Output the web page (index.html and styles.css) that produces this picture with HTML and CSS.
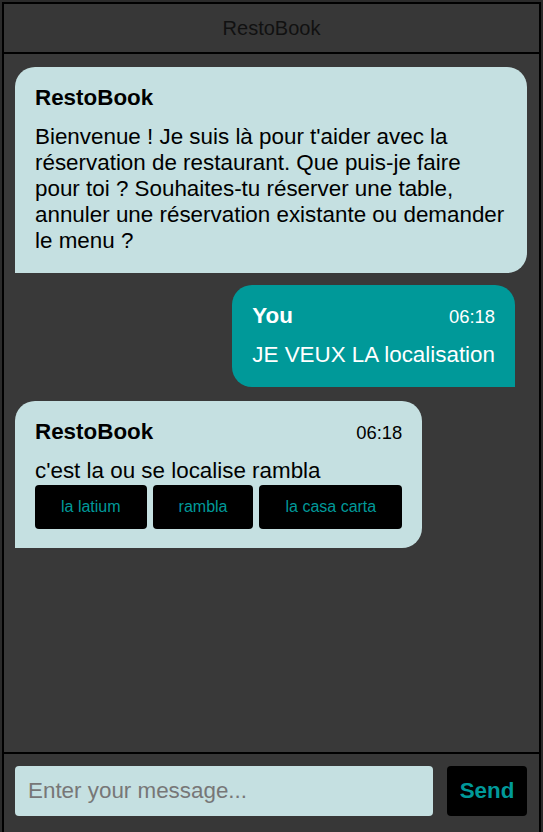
FILE: index.html
```html
<!DOCTYPE html>
<html lang="fr">
<head>
<meta charset="utf-8">
<title>RestoBook</title>
<link rel="stylesheet" href="styles.css">
</head>
<body>
<div class="app">
  <header class="app-header">RestoBook</header>
  <main class="messages">
    <div class="bubble bot">
      <div class="meta"><span class="name">RestoBook</span></div>
      <div class="text">Bienvenue ! Je suis là pour t'aider avec la réservation de restaurant. Que puis-je faire pour toi ? Souhaites-tu réserver une table, annuler une réservation existante ou demander le menu ?</div>
    </div>
    <div class="bubble user">
      <div class="meta"><span class="name">You</span><span class="time">06:18</span></div>
      <div class="text">JE VEUX LA localisation</div>
    </div>
    <div class="bubble bot">
      <div class="meta"><span class="name">RestoBook</span><span class="time">06:18</span></div>
      <div class="text">c'est la ou se localise rambla</div>
      <div class="options">
        <button class="option">la latium</button>
        <button class="option">rambla</button>
        <button class="option">la casa carta</button>
      </div>
    </div>
  </main>
  <footer class="composer">
    <input class="composer-input" type="text" placeholder="Enter your message...">
    <button class="send">Send</button>
  </footer>
</div>
</body>
</html>
```

FILE: styles.css
```css
html, body {
  margin: 0;
  padding: 0;
  height: 100%;
  overflow: hidden;
}
body {
  background: #2b2b2b;
  font-family: "Liberation Sans", Arial, sans-serif;
}
.app {
  margin: 2px;
  height: 832px;
  box-sizing: border-box;
  border: 2px solid #000;
  background: #383838;
  display: flex;
  flex-direction: column;
}
.app-header {
  flex: none;
  height: 50px;
  box-sizing: border-box;
  display: flex;
  align-items: center;
  justify-content: center;
  padding-top: 1px;
  font-size: 20px;
  color: #111;
  background: #373737;
  border-bottom: 2px solid #000;
}
.messages {
  flex: 1;
  display: flex;
  flex-direction: column;
  align-items: flex-start;
  gap: 12px;
  padding: 13px 12px 13px 11px;
  background: #393939;
  overflow: hidden;
}
.bubble {
  max-width: 100%;
  box-sizing: border-box;
  padding: 18px 20px 19px;
  border-radius: 20px;
  font-size: 22.4px;
}
.bubble.bot {
  background: #c5e0e1;
  color: #000;
  border-bottom-left-radius: 0;
}
.bubble.user {
  align-self: flex-end;
  margin-right: 12px;
  margin-bottom: 2px;
  background: #009999;
  color: #fff;
  border-bottom-right-radius: 0;
}
.meta {
  display: flex;
  justify-content: space-between;
  align-items: baseline;
  gap: 20px;
  margin-bottom: 13px;
}
.name {
  font-weight: bold;
}
.time {
  font-size: 18.4px;
}
.text {
  line-height: 26px;
}
.options {
  display: flex;
  gap: 6px;
  margin-top: 1px;
}
.option {
  height: 44px;
  padding: 0 26px;
  border: none;
  border-radius: 4px;
  background: #000;
  color: #009999;
  font-family: "Liberation Sans", Arial, sans-serif;
  font-size: 16px;
}
.composer {
  flex: none;
  display: flex;
  gap: 14px;
  padding: 12px 12px 16px 11px;
  border-top: 2px solid #000;
  background: #373737;
}
.composer-input {
  flex: 1;
  min-width: 0;
  height: 50px;
  box-sizing: border-box;
  border: none;
  border-radius: 4px;
  background: #c5e0e1;
  padding: 0 13px;
  font-family: "Liberation Sans", Arial, sans-serif;
  font-size: 22.4px;
  color: #000;
  outline: none;
}
.composer-input::placeholder {
  color: #777;
}
.send {
  flex: none;
  width: 80px;
  height: 50px;
  border: none;
  border-radius: 4px;
  background: #000;
  color: #009999;
  font-family: "Liberation Sans", Arial, sans-serif;
  font-weight: bold;
  font-size: 22.4px;
  padding: 0;
}
```
